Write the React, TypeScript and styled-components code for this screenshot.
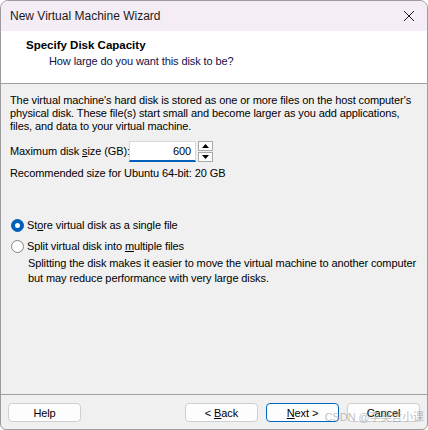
import React from "react";
import styled, { createGlobalStyle } from "styled-components";

const Global = createGlobalStyle`
  html, body { margin: 0; padding: 0; background: #ffffff; }
  body { font-family: "Liberation Sans", Arial, sans-serif; font-size: 11px; color: #000; letter-spacing: -0.1px; }
  * { box-sizing: border-box; }
`;

const Window = styled.div`
  width: 428px;
  height: 430px;
  border: 1px solid #9c9c9c;
  border-radius: 8px 8px 6px 6px;
  overflow: hidden;
  display: flex;
  flex-direction: column;
  background: #f0f0f0;
`;

const TitleBar = styled.div`
  height: 30px;
  flex: none;
  background: #f5edf5;
  display: flex;
  align-items: center;
  justify-content: space-between;
  padding: 0 8px 0 9px;
  font-size: 12px;
  letter-spacing: 0;
  color: #1b1b1b;
`;

const CloseBtn = styled.div`
  width: 16px;
  height: 16px;
  display: flex;
  align-items: center;
  justify-content: center;
  margin-right: 2px;
`;

const Header = styled.div`
  height: 53px;
  flex: none;
  background: #ffffff;
  border-bottom: 1px solid #a0a0a0;
  padding: 7px 0 0 25px;
  display: flex;
  flex-direction: column;
  gap: 2px;
`;

const HeaderTitle = styled.div`
  font-weight: bold;
  font-size: 11.5px;
  line-height: 14px;
  letter-spacing: 0;
`;

const HeaderSub = styled.div`
  padding-left: 23px;
  line-height: 14px;
  color: #10104a;
`;

const Body = styled.div`
  flex: 1;
  padding: 10px 9px 0 9px;
  display: flex;
  flex-direction: column;
  white-space: nowrap;
`;

const Para = styled.p`
  margin: 0;
  line-height: 13px;
`;

const SizeRow = styled.div`
  display: flex;
  align-items: center;
  margin-top: 7px;
  height: 22px;
`;

const Label = styled.span`
  width: 119px;
  flex: none;
`;

const Input = styled.div`
  width: 67px;
  height: 21px;
  background: #fff;
  border: 1px solid #d8d8d8;
  border-bottom: 2px solid #005fb8;
  display: flex;
  align-items: center;
  justify-content: flex-end;
  padding-right: 4px;
`;

const Spinner = styled.div`
  display: flex;
  flex-direction: column;
  gap: 1px;
  margin-left: 2px;
`;

const SpinBtn = styled.div`
  width: 15px;
  height: 10px;
  background: #fdfdfd;
  border: 1px solid #a8a8a8;
  display: flex;
  align-items: center;
  justify-content: center;
`;

const Recommended = styled.div`
  margin-top: 5px;
  line-height: 13px;
`;

const Options = styled.div`
  margin-top: 39px;
  display: flex;
  flex-direction: column;
  gap: 8px;
`;

const RadioRow = styled.label`
  display: flex;
  align-items: center;
  gap: 3px;
  line-height: 13px;
`;

const RadioDot = styled.span<{ $checked?: boolean }>`
  width: 13px;
  height: 13px;
  border-radius: 50%;
  flex: none;
  margin-left: 1px;
  background: ${(p) => (p.$checked ? "#005fb8" : "#fff")};
  border: 1px solid ${(p) => (p.$checked ? "#005fb8" : "#858585")};
  display: flex;
  align-items: center;
  justify-content: center;
  &::after {
    content: "";
    display: ${(p) => (p.$checked ? "block" : "none")};
    width: 5px;
    height: 5px;
    border-radius: 50%;
    background: #fff;
  }
`;

const Desc = styled.p`
  margin: 3px 0 0 18px;
  line-height: 15px;
`;

const Footer = styled.div`
  height: 35px;
  flex: none;
  border-top: 1px solid #a0a0a0;
  display: flex;
  align-items: flex-start;
  padding: 8px 7px 0 7px;
  position: relative;
`;

const Button = styled.div<{ $primary?: boolean }>`
  width: 73px;
  height: 19px;
  border: 1px solid ${(p) => (p.$primary ? "#0067c0" : "#cfcfcf")};
  border-radius: 4px;
  background: #fdfdfd;
  display: flex;
  align-items: center;
  justify-content: center;
  font-size: 11px;
  white-space: pre;
`;

const Spacer = styled.div`
  flex: 1;
`;

const ButtonGroup = styled.div`
  display: flex;
  gap: 8px;
`;

const Watermark = styled.div`
  position: absolute;
  right: 3px;
  top: 13px;
  font-size: 11px;
  color: rgba(150, 150, 150, 0.6);
  font-family: "Liberation Sans", "Noto Sans CJK SC", sans-serif;
  pointer-events: none;
`;

const U = styled.span`
  text-decoration: underline;
`;

export default function App() {
  return (
    <>
      <Global />
      <Window>
        <TitleBar>
          <span>New Virtual Machine Wizard</span>
          <CloseBtn>
            <svg width="12" height="12" viewBox="0 0 12 12">
              <path d="M1 1 L11 11 M11 1 L1 11" stroke="#1b1b1b" strokeWidth="1" />
            </svg>
          </CloseBtn>
        </TitleBar>
        <Header>
          <HeaderTitle>Specify Disk Capacity</HeaderTitle>
          <HeaderSub>How large do you want this disk to be?</HeaderSub>
        </Header>
        <Body>
          <Para>
            The virtual machine's hard disk is stored as one or more files on the host computer's
            <br />
            physical disk. These file(s) start small and become larger as you add applications,
            <br />
            files, and data to your virtual machine.
          </Para>
          <SizeRow>
            <Label>
              Maximum disk <U>s</U>ize (GB):
            </Label>
            <Input>600</Input>
            <Spinner>
              <SpinBtn>
                <svg width="7" height="4" viewBox="0 0 7 4">
                  <path d="M0 4 L3.5 0 L7 4 Z" fill="#000" />
                </svg>
              </SpinBtn>
              <SpinBtn>
                <svg width="7" height="4" viewBox="0 0 7 4">
                  <path d="M0 0 L3.5 4 L7 0 Z" fill="#000" />
                </svg>
              </SpinBtn>
            </Spinner>
          </SizeRow>
          <Recommended>Recommended size for Ubuntu 64-bit: 20 GB</Recommended>
          <Options>
            <RadioRow>
              <RadioDot $checked />
              <span>
                St<U>o</U>re virtual disk as a single file
              </span>
            </RadioRow>
            <div>
              <RadioRow>
                <RadioDot />
                <span>
                  Split virtual disk into <U>m</U>ultiple files
                </span>
              </RadioRow>
              <Desc>
                Splitting the disk makes it easier to move the virtual machine to another computer
                <br />
                but may reduce performance with very large disks.
              </Desc>
            </div>
          </Options>
        </Body>
        <Footer>
          <Button>Help</Button>
          <Spacer />
          <ButtonGroup>
            <Button>
              <span>
                {"< "}
                <U>B</U>ack
              </span>
            </Button>
            <Button $primary>
              <span>
                <U>N</U>
                {"ext >"}
              </span>
            </Button>
            <Button>Cancel</Button>
          </ButtonGroup>
          <Watermark>CSDN @李昊哲小课</Watermark>
        </Footer>
      </Window>
    </>
  );
}
